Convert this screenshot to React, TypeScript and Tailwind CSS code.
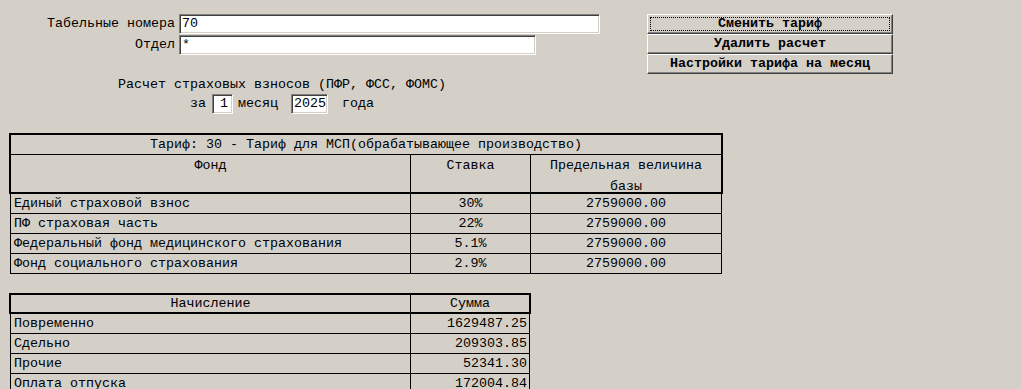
import React from "react";

const font = "font-['Liberation_Mono','Courier_New',monospace] text-[13.333px] leading-[16px]";

function Field({ w, value, align = "left" }: { w: string; value: string; align?: "left" | "right" }) {
  return (
    <div
      className={`${w} h-[20px] bg-white border border-t-[#808080] border-l-[#808080] border-b-white border-r-white shadow-[inset_1px_1px_0_#404040,inset_-1px_-1px_0_#d4d0c8] flex items-center px-[2px] ${
        align === "right" ? "justify-end pr-[4px]" : ""
      }`}
    >
      <span>{value}</span>
    </div>
  );
}

function Btn({ label, focus }: { label: string; focus?: boolean }) {
  return (
    <div className="h-[20px] w-full border border-t-white border-l-white border-b-[#404040] border-r-[#404040] shadow-[inset_-1px_-1px_0_#808080] flex items-center justify-center p-[2px]">
      <div
        className={`w-full h-full flex items-center justify-center font-bold ${
          focus ? "border border-dotted border-black" : ""
        }`}
      >
        {label}
      </div>
    </div>
  );
}

const fondRows = [
  ["Единый страховой взнос", "30%", "2759000.00"],
  ["ПФ страховая часть", "22%", "2759000.00"],
  ["Федеральный фонд медицинского страхования", "5.1%", "2759000.00"],
  ["Фонд социального страхования", "2.9%", "2759000.00"],
];

const nachRows = [
  ["Повременно", "1629487.25"],
  ["Сдельно", "209303.85"],
  ["Прочие", "52341.30"],
  ["Оплата отпуска", "172004.84"],
];

export default function App() {
  return (
    <div className={`w-[1021px] h-[389px] overflow-hidden bg-[#d4d0c8] text-black ${font}`}>
      {/* top section */}
      <div className="flex pt-[14px]">
        <div className="flex flex-col">
          <div className="flex items-center gap-[4px] h-[20px]">
            <div className="w-[175px] text-right">Табельные номера</div>
            <Field w="w-[421px]" value="70" />
          </div>
          <div className="flex items-center gap-[4px] h-[20px] mt-[1px]">
            <div className="w-[175px] text-right">Отдел</div>
            <Field w="w-[357px]" value="*" />
          </div>
          <div className="pl-[118px] mt-[22px] h-[16px]">Расчет страховых взносов (ПФР, ФСС, ФОМС)</div>
          <div className="flex items-center pl-[190px] mt-[1px] h-[20px]">
            <span>за</span>
            <div className="ml-[6px]">
              <Field w="w-[21px]" value="1" align="right" />
            </div>
            <span className="ml-[5px]">месяц</span>
            <div className="ml-[13px]">
              <Field w="w-[37px]" value="2025" />
            </div>
            <span className="ml-[14px]">года</span>
          </div>
        </div>
        <div className="ml-[47px] w-[246px] flex flex-col">
          <Btn label="Сменить тариф" focus />
          <Btn label="Удалить расчет" />
          <Btn label="Настройки тарифа на месяц" />
        </div>
      </div>

      {/* table 1 */}
      <div className="mt-[19px] ml-[9px]">
        <div className="w-[714px] border-2 border-black">
          <div className="h-[20px] border-b border-black flex items-center justify-center">
            Тариф: 30 - Тариф для МСП(обрабатывающее производство)
          </div>
          <div className="flex h-[37px] leading-[21px]">
            <div className="w-[400px] border-r border-black text-center">Фонд</div>
            <div className="w-[120px] border-r border-black text-center">Ставка</div>
            <div className="flex-1 text-center">
              Предельная величина
              <br />
              базы
            </div>
          </div>
        </div>
        <div className="ml-[1px] w-[712px] border-l border-r border-black">
          {fondRows.map((r) => (
            <div key={r[0]} className="flex h-[20px] border-b border-black">
              <div className="w-[400px] border-r border-black pl-[3px] flex items-center">{r[0]}</div>
              <div className="w-[120px] border-r border-black flex items-center justify-center">{r[1]}</div>
              <div className="flex-1 flex items-center justify-center">{r[2]}</div>
            </div>
          ))}
        </div>
      </div>

      {/* table 2 */}
      <div className="mt-[19px] ml-[9px]">
        <div className="w-[522px] border-2 border-black">
          <div className="flex h-[17px]">
            <div className="w-[400px] border-r border-black flex items-center justify-center">Начисление</div>
            <div className="flex-1 flex items-center justify-center">Сумма</div>
          </div>
        </div>
        <div className="ml-[1px] w-[520px] border-l border-r border-black">
          {nachRows.map((r) => (
            <div key={r[0]} className="flex h-[20px] border-b border-black">
              <div className="w-[400px] border-r border-black pl-[3px] flex items-center">{r[0]}</div>
              <div className="flex-1 flex items-center justify-end pr-[2px]">{r[1]}</div>
            </div>
          ))}
        </div>
      </div>
    </div>
  );
}
